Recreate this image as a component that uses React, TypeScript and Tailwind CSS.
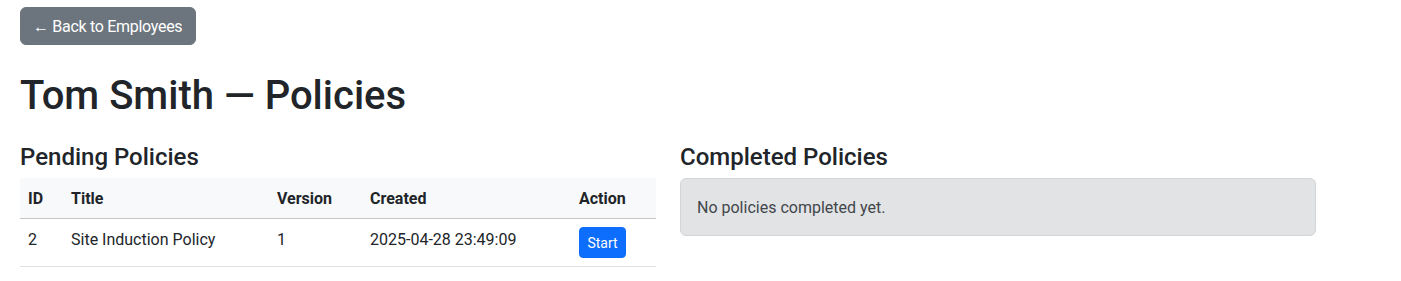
export default function App() {
  return (
    <div className="min-h-screen bg-white px-[20px] pt-[7px] text-[16px] leading-[24px] text-[#212529] font-['Roboto','Liberation_Sans',sans-serif]">
      <button className="h-[38px] w-[176px] whitespace-nowrap rounded-[6px] border border-[#6c757d] bg-[#6c757d] pl-[12px] pr-[8px] pt-[1px] text-left text-[16px] leading-[24px] tracking-[-0.3px] text-white">
        ← Back to Employees
      </button>

      <h1 className="mt-[27px] text-[40px] font-medium leading-[48px]">Tom Smith — Policies</h1>

      <div className="mt-[23px] flex w-[1296px] gap-[24px]">
        <div className="w-[636px]">
          <h4 className="mb-[6px] text-[24px] font-medium leading-[29px]">Pending Policies</h4>
          <table className="w-[636px] border-collapse text-left align-top">
            <thead>
              <tr className="border-b border-[#c6c7c8] bg-[#f8f9fa]">
                <th className="w-[43px] px-[8px] pt-[9px] pb-[7px] font-bold">ID</th>
                <th className="w-[206px] px-[8px] pt-[9px] pb-[7px] font-bold">Title</th>
                <th className="w-[93px] px-[8px] pt-[9px] pb-[7px] font-bold">Version</th>
                <th className="w-[209px] px-[8px] pt-[9px] pb-[7px] font-bold">Created</th>
                <th className="w-[85px] px-[8px] pt-[9px] pb-[7px] font-bold">Action</th>
              </tr>
            </thead>
            <tbody>
              <tr className="border-b border-[#dee2e6]">
                <td className="px-[8px] pt-[9px] pb-[7px] align-top">2</td>
                <td className="px-[8px] pt-[9px] pb-[7px] align-top">Site Induction Policy</td>
                <td className="px-[8px] pt-[9px] pb-[7px] align-top">1</td>
                <td className="px-[8px] pt-[9px] pb-[7px] align-top">2025-04-28 23:49:09</td>
                <td className="px-[8px] pt-[8px] pb-[8px] align-top">
                  <button className="h-[31px] w-[47px] rounded-[4px] border border-[#0d6efd] bg-[#0d6efd] px-[7px] pt-[1px] text-[14px] leading-[21px] text-white">
                    Start
                  </button>
                </td>
              </tr>
            </tbody>
          </table>
        </div>

        <div className="w-[636px]">
          <h4 className="mb-[6px] text-[24px] font-medium leading-[29px]">Completed Policies</h4>
          <div className="rounded-[6px] border border-[#d3d6d8] bg-[#e2e3e5] px-[16px] pt-[17px] pb-[15px] text-[#41464b]">
            No policies completed yet.
          </div>
        </div>
      </div>
    </div>
  );
}
